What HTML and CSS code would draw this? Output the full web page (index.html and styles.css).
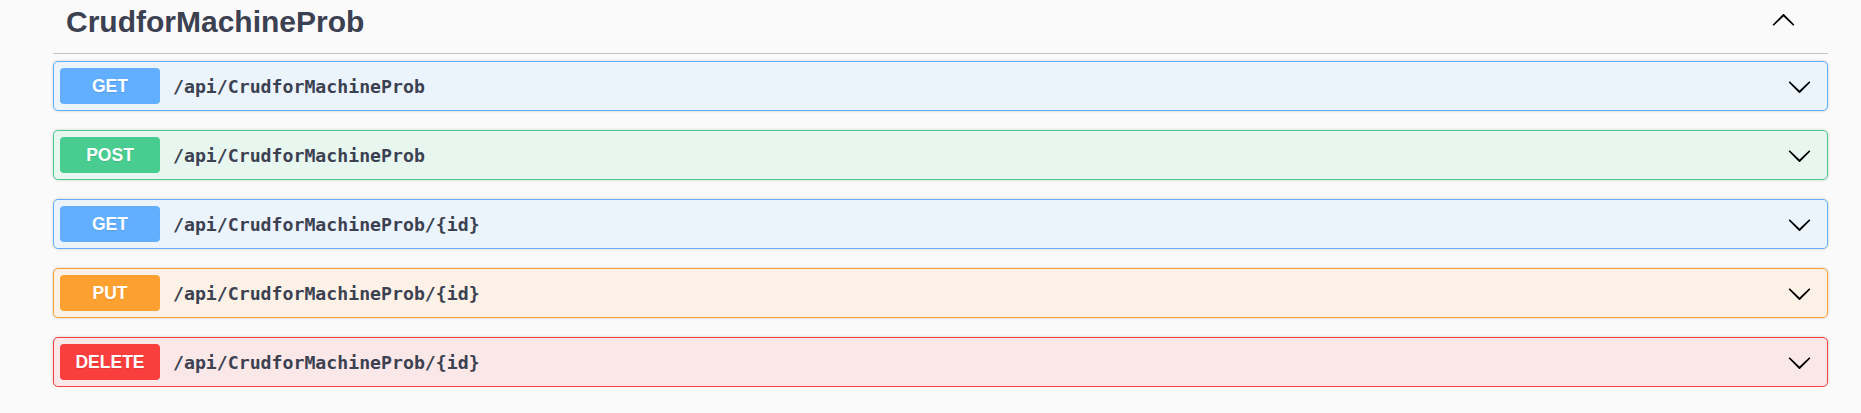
FILE: index.html
```html
<!DOCTYPE html>
<html>
<head>
<meta charset="utf-8">
<link rel="stylesheet" href="styles.css">
</head>
<body>
<div class="wrapper">
  <div class="tag">
    <h3 class="tag-title">CrudforMachineProb</h3>
    <svg class="tag-arrow" viewBox="0 0 20 20" width="25" height="25"><path d="M17.418 6.109c.272-.268.709-.268.979 0s.271.701 0 .969l-7.908 7.83c-.27.268-.707.268-.979 0l-7.908-7.83c-.27-.268-.27-.701 0-.969.271-.268.709-.268.979 0L10 13.25l7.418-7.141z" transform="rotate(180 10 10)"/></svg>
  </div>
  <div class="ops">
    <div class="op op-get">
      <span class="method">GET</span>
      <span class="path">/api/CrudforMachineProb</span>
      <svg class="arrow" viewBox="0 0 20 20" width="25" height="25"><path d="M17.418 6.109c.272-.268.709-.268.979 0s.271.701 0 .969l-7.908 7.830c-.27.268-.707.268-.979 0l-7.908-7.83c-.27-.268-.27-.701 0-.969.271-.268.709-.268.979 0L10 13.25l7.418-7.141z"/></svg>
    </div>
    <div class="op op-post">
      <span class="method">POST</span>
      <span class="path">/api/CrudforMachineProb</span>
      <svg class="arrow" viewBox="0 0 20 20" width="25" height="25"><path d="M17.418 6.109c.272-.268.709-.268.979 0s.271.701 0 .969l-7.908 7.83c-.27.268-.707.268-.979 0l-7.908-7.83c-.27-.268-.27-.701 0-.969.271-.268.709-.268.979 0L10 13.25l7.418-7.141z"/></svg>
    </div>
    <div class="op op-get">
      <span class="method">GET</span>
      <span class="path">/api/CrudforMachineProb/{id}</span>
      <svg class="arrow" viewBox="0 0 20 20" width="25" height="25"><path d="M17.418 6.109c.272-.268.709-.268.979 0s.271.701 0 .969l-7.908 7.83c-.27.268-.707.268-.979 0l-7.908-7.83c-.27-.268-.27-.701 0-.969.271-.268.709-.268.979 0L10 13.25l7.418-7.141z"/></svg>
    </div>
    <div class="op op-put">
      <span class="method">PUT</span>
      <span class="path">/api/CrudforMachineProb/{id}</span>
      <svg class="arrow" viewBox="0 0 20 20" width="25" height="25"><path d="M17.418 6.109c.272-.268.709-.268.979 0s.271.701 0 .969l-7.908 7.83c-.27.268-.707.268-.979 0l-7.908-7.83c-.27-.268-.27-.701 0-.969.271-.268.709-.268.979 0L10 13.25l7.418-7.141z"/></svg>
    </div>
    <div class="op op-delete">
      <span class="method">DELETE</span>
      <span class="path">/api/CrudforMachineProb/{id}</span>
      <svg class="arrow" viewBox="0 0 20 20" width="25" height="25"><path d="M17.418 6.109c.272-.268.709-.268.979 0s.271.701 0 .969l-7.908 7.83c-.27.268-.707.268-.979 0l-7.908-7.83c-.27-.268-.27-.701 0-.969.271-.268.709-.268.979 0L10 13.25l7.418-7.141z"/></svg>
    </div>
  </div>
</div>
</body>
</html>
```

FILE: styles.css
```css
html, body {
  margin: 0;
  padding: 0;
  background: #fafafa;
}

.wrapper {
  padding: 0 33px 0 53px;
  font-family: "Liberation Sans", Arial, sans-serif;
  color: #3b4151;
}

.tag {
  display: flex;
  align-items: flex-start;
  height: 53px;
  border-bottom: 1px solid #c4c5c9;
  box-sizing: content-box;
}

.tag-title {
  flex: 1;
  margin: 0;
  padding: 7px 0 0 13px;
  font-size: 30px;
  line-height: 30px;
  font-weight: bold;
  color: #3b4151;
}

.tag-arrow {
  margin: 8px 32px 0 0;
  fill: #000;
}

.ops {
  display: flex;
  flex-direction: column;
  gap: 19px;
  padding-top: 7px;
}

.op {
  display: flex;
  align-items: center;
  height: 50px;
  box-sizing: border-box;
  padding: 0 6px;
  border: 1px solid;
  border-radius: 5px;
  box-shadow: 0 0 3px rgba(0, 0, 0, 0.19);
}

.method {
  min-width: 100px;
  height: 36px;
  line-height: 36px;
  border-radius: 4px;
  text-align: center;
  color: #fff;
  font-size: 17.5px;
  font-weight: bold;
  text-shadow: 0 1px 0 rgba(0, 0, 0, 0.1);
}

.path {
  flex: 1;
  padding-left: 13px;
  font-family: "DejaVu Sans Mono", "Liberation Mono", monospace;
  font-weight: bold;
  font-size: 18.2px;
  color: #3b4151;
}

.arrow {
  margin-right: 9px;
  fill: #000;
}

.op-get { background: #ebf3fb; border-color: #61affe; }
.op-get .method { background: #61affe; }

.op-post { background: #e8f6f0; border-color: #49cc90; }
.op-post .method { background: #49cc90; }

.op-put { background: #fbf1e6; border-color: #fca130; }
.op-put .method { background: #fca130; }

.op-delete { background: #fae7e7; border-color: #f93e3e; }
.op-delete .method { background: #f93e3e; }
```
